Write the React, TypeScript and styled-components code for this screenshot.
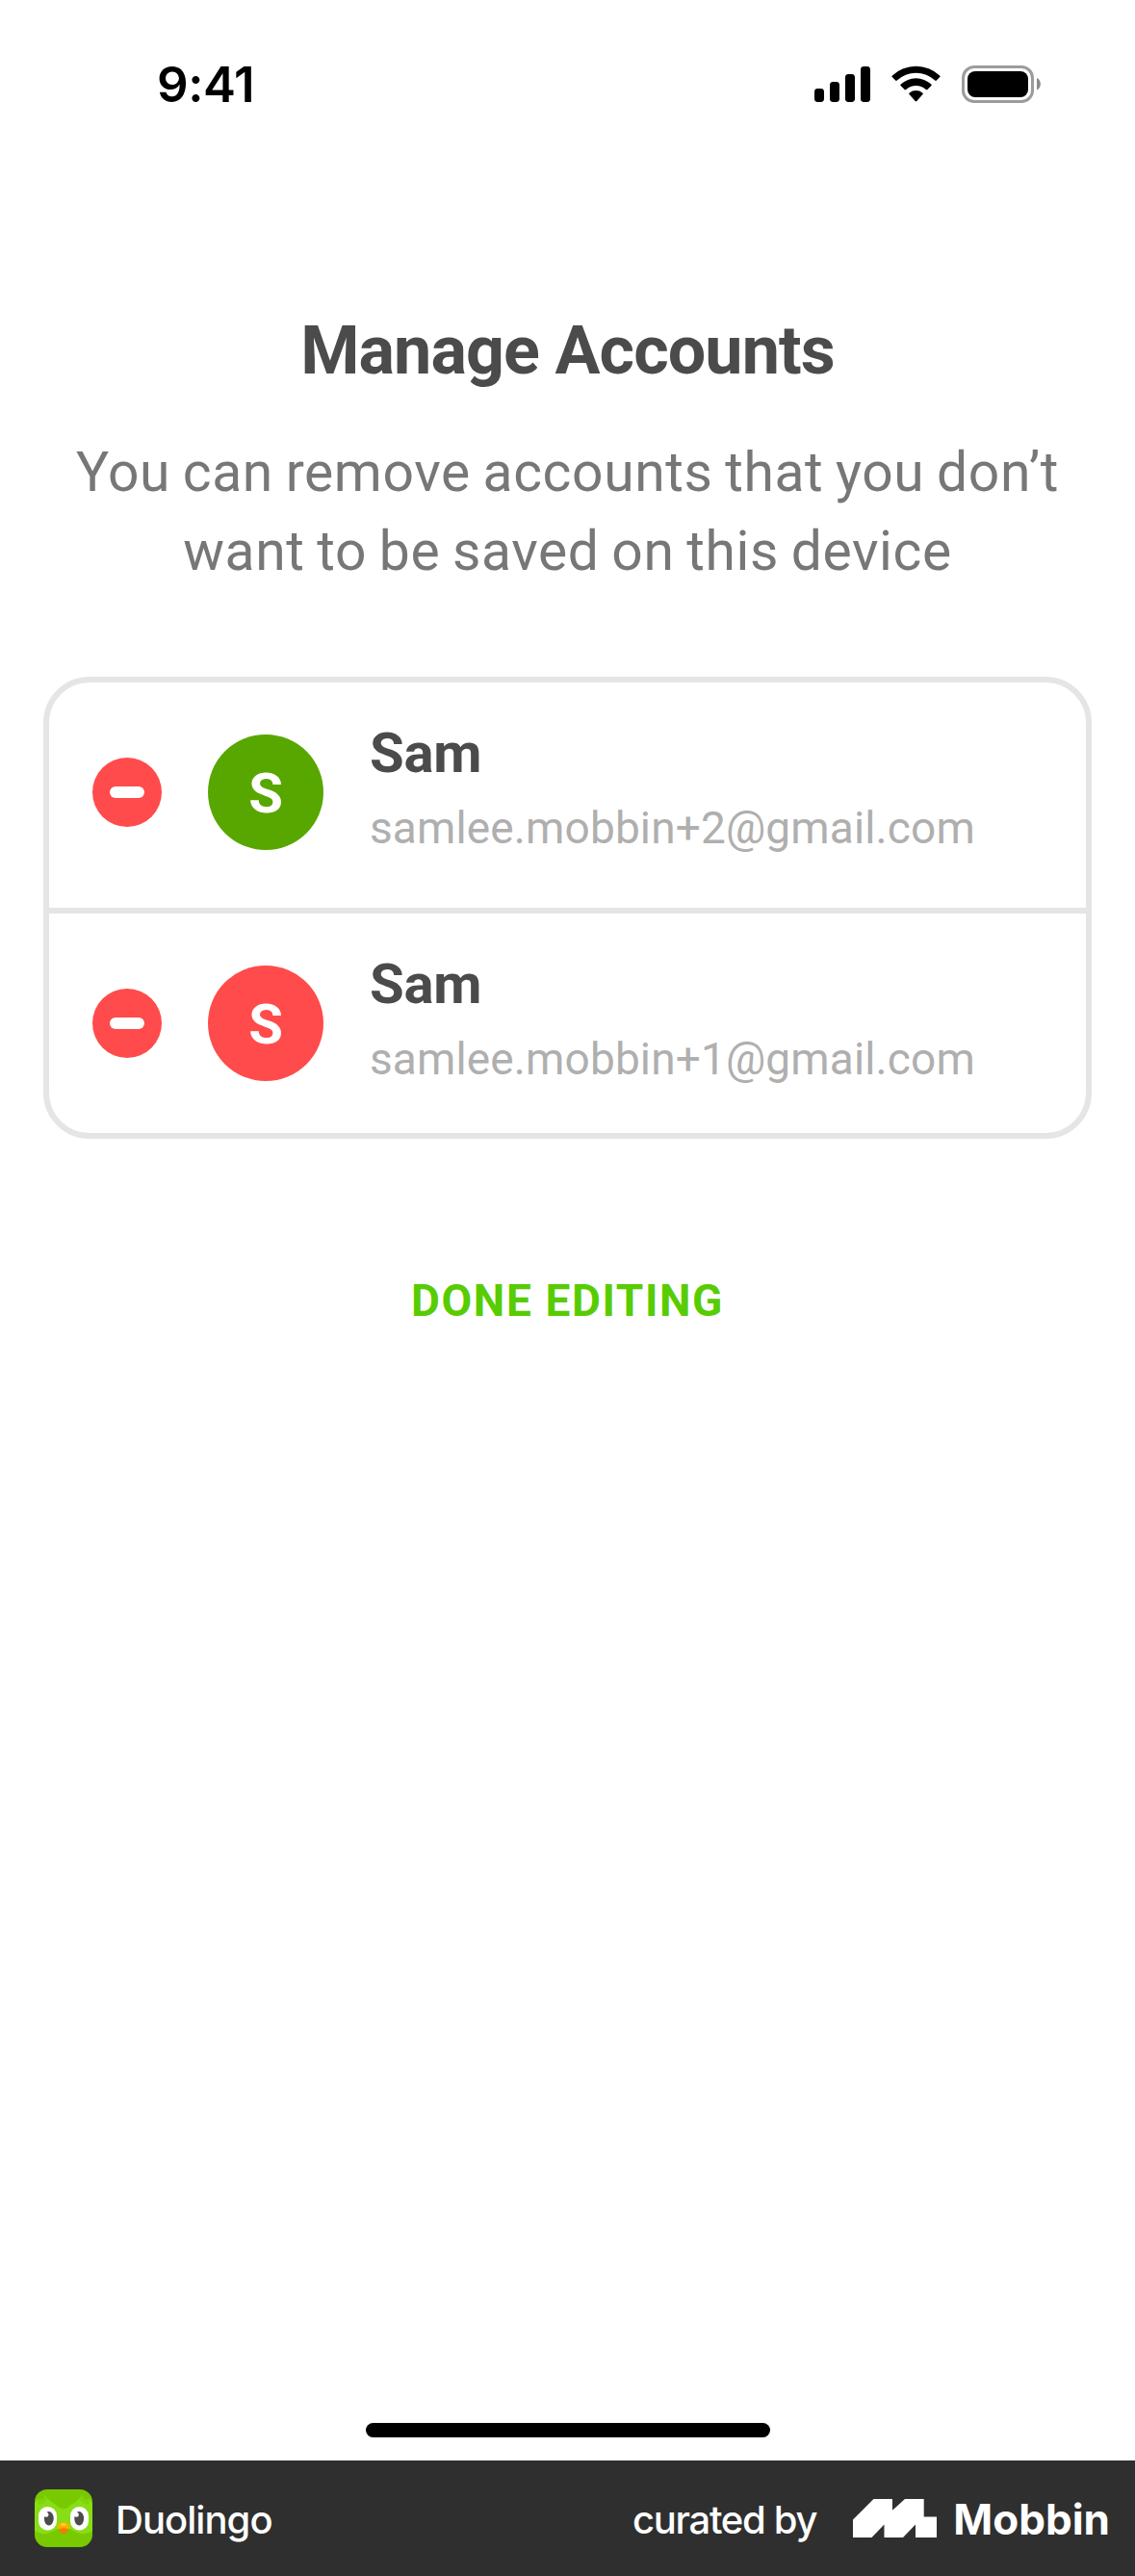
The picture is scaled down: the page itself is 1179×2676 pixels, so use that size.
import React from "react";
import styled, { createGlobalStyle } from "styled-components";

const GlobalStyle = createGlobalStyle`
  *, *::before, *::after { box-sizing: border-box; }
  body { margin: 0; background: #fff; }
  h1, p { margin: 0; font-weight: 400; }
  svg { display: block; flex: none; }
`;

const rounded = `Roboto, "Liberation Sans", sans-serif`;
const system = `Inter, "Liberation Sans", sans-serif`;

const Screen = styled.div`
  width: 1179px;
  height: 2676px;
  display: flex;
  flex-direction: column;
  overflow: hidden;
  background: #fff;
  font-family: ${rounded};
`;

const StatusBar = styled.header`
  display: flex;
  justify-content: space-between;
  align-items: flex-start;
  height: 322px;
  padding: 58px 98px 0 163px;
`;

const Clock = styled.span`
  font: 600 51px/60px ${system};
  letter-spacing: -0.4px;
  color: #000;
`;

const StatusIcons = styled.div`
  display: flex;
  align-items: flex-start;
  padding-top: 10px;
`;

const Main = styled.main`
  flex: 1;
  display: flex;
  flex-direction: column;
  align-items: center;
`;

const Title = styled.h1`
  font-size: 70px;
  line-height: 84px;
  font-weight: 700;
  letter-spacing: -0.9px;
  color: #4b4b4b;
`;

const Description = styled.p`
  width: 1060px;
  margin-top: 44px;
  font-size: 57px;
  line-height: 82px;
  letter-spacing: 0.6px;
  word-spacing: -2px;
  text-align: center;
  color: #777;
`;

const AccountList = styled.ul`
  list-style: none;
  width: 1089px;
  margin: 89px 0 0;
  padding: 0;
  border: 6px solid #e5e5e5;
  border-radius: 48px;
`;

const AccountRow = styled.li`
  display: flex;
  align-items: center;
  height: 228px;
  padding-left: 45px;

  & + & {
    border-top: 6px solid #e5e5e5;
    height: 234px;
  }
  &:first-child {
    height: 234px;
    padding-bottom: 6px;
  }
`;

const RemoveButton = styled.button`
  display: grid;
  place-items: center;
  width: 72px;
  height: 72px;
  padding: 0;
  border: 0;
  border-radius: 50%;
  background: #ff4b4b;

  &::before {
    content: "";
    width: 36px;
    height: 12px;
    border-radius: 6px;
    background: #fff;
  }
`;

const Avatar = styled.div<{ $color: string }>`
  width: 120px;
  height: 120px;
  margin-left: 48px;
  border-radius: 50%;
  background: ${(p) => p.$color};
  color: #fff;
  font-size: 58px;
  line-height: 122px;
  font-weight: 700;
  text-align: center;
`;

const AccountText = styled.div`
  display: flex;
  flex-direction: column;
  gap: 18px;
  margin-left: 48px;
  padding-bottom: 8px;
`;

const Name = styled.span`
  font-size: 58px;
  line-height: 64px;
  font-weight: 700;
  letter-spacing: -0.2px;
  color: #4b4b4b;
`;

const Email = styled.span`
  font-size: 46px;
  line-height: 56px;
  letter-spacing: 0.13px;
  color: #afafaf;
`;

const DoneButton = styled.button`
  margin-top: 138px;
  padding: 0;
  border: 0;
  background: none;
  font: 700 46px/60px ${rounded};
  letter-spacing: 1.6px;
  color: #58cc02;
`;

const HomeIndicator = styled.div`
  width: 420px;
  height: 15px;
  margin: auto 0 24px;
  border-radius: 8px;
  background: #000;
`;

const Footer = styled.footer`
  display: flex;
  align-items: center;
  height: 120px;
  padding: 0 26px 0 36px;
  background: #2f2f2f;
  color: #fff;
  font-family: ${system};
`;

const AppName = styled.span`
  margin-left: 24px;
  padding-top: 3px;
  font-size: 40px;
  line-height: 48px;
  font-weight: 500;
  letter-spacing: -0.95px;
`;

const Credit = styled.span`
  margin-left: auto;
  padding-top: 3px;
  font-size: 40px;
  line-height: 48px;
  font-weight: 500;
  letter-spacing: -1.3px;
`;

const MobbinMark = styled.svg`
  margin-left: 38px;
`;

const Brand = styled.span`
  margin-left: 17px;
  padding-top: 1px;
  font-size: 44px;
  line-height: 48px;
  font-weight: 700;
  letter-spacing: 0;
`;

const SystemIcons = () => (
  <StatusIcons>
    <svg width="236" height="40" viewBox="0 0 236 40">
      <rect x="1" y="24" width="10" height="14" rx="3.4" />
      <rect x="17" y="17" width="10" height="21" rx="3.4" />
      <rect x="33" y="9" width="10" height="29" rx="3.4" />
      <rect x="49" y="1" width="10" height="37" rx="3.4" />
      <path d="M81.8 12 Q81 11.200 81.900 10.400 A36 36 0 0 1 131.100 10.400 Q132 11.200 131.200 12 L127.800 15.600 Q127 16.300 126.200 15.600 A28.600 28.600 0 0 0 86.800 15.600 Q86 16.300 85.200 15.600 Z" />
      <path d="M90.600 21.100 Q89.800 20.300 90.700 19.500 A23.200 23.200 0 0 1 122.300 19.500 Q123.200 20.300 122.400 21.100 L118.400 25 Q117.600 25.700 116.800 25 A15.600 15.600 0 0 0 96.200 25 Q95.400 25.700 94.600 25 Z" />
      <path d="M99.500 30.100 Q98.700 29.300 99.700 28.500 A10.800 10.800 0 0 1 113.300 28.500 Q114.300 29.300 113.500 30.100 L107.300 36.900 Q106.500 37.700 105.700 36.900 Z" />
      <rect x="155.500" y="1.500" width="72" height="36" rx="11.500" fill="none" stroke="#9c9c9c" strokeWidth="3" />
      <rect x="160" y="6" width="63" height="27" rx="8" />
      <path d="M232 13 A7 7 0 0 1 232 25.500 Z" fill="#8c8c8c" />
    </svg>
  </StatusIcons>
);

const OwlIcon = () => (
  <svg width="60" height="60" viewBox="0 0 60 60">
    <defs>
      <clipPath id="owl-tile">
        <rect width="60" height="60" rx="13" />
      </clipPath>
    </defs>
    <g clipPath="url(#owl-tile)">
      <rect width="60" height="60" fill="#78c900" />
      <path d="M0 15 L3 10 L8 11 L11 6 Q16 13 22 16 Q26 20 30 20 Q34 20 38 16 Q44 13 49 6 L52 11 L57 10 L60 15 V43 Q52 49 42 44 L36 41 H24 L18 44 Q8 49 0 43 Z" fill="#89dd14" />
      <path d="M3 10 L8 11 L11 6 L14 10 L9 15 L4 16 Z M57 10 L52 11 L49 6 L46 10 L51 15 L56 16 Z" fill="#81d40a" />
      <rect x="4" y="18" width="19" height="24.500" rx="9.500" fill="#fff" />
      <rect x="37" y="18" width="19" height="24.500" rx="9.500" fill="#fff" />
      <ellipse cx="14.800" cy="30.300" rx="4.900" ry="7.200" fill="#4b4b4b" />
      <ellipse cx="46.200" cy="30.300" rx="4.900" ry="7.200" fill="#4b4b4b" />
      <circle cx="11.900" cy="26.200" r="2.500" fill="#fff" />
      <circle cx="43.300" cy="26.200" r="2.500" fill="#fff" />
      <path d="M25 40 H35 Q34.500 46 30 46 Q25.500 46 25 40 Z" fill="#f47d00" />
      <path d="M23.500 38.500 Q26 34 30 34 Q34 34 36.500 38.500 Q37 41 34 41 Q30 39.500 26 41 Q23 41 23.500 38.500 Z" fill="#ffb100" />
      <ellipse cx="30" cy="36.600" rx="2.600" ry="1.500" fill="#ffd03a" />
    </g>
  </svg>
);

const accounts = [
  { name: "Sam", email: "samlee.mobbin+2@gmail.com", color: "#58a700" },
  { name: "Sam", email: "samlee.mobbin+1@gmail.com", color: "#ff4b4b" },
];

export default function App() {
  return (
    <Screen>
      <GlobalStyle />
      <StatusBar>
        <Clock>9:41</Clock>
        <SystemIcons />
      </StatusBar>
      <Main>
        <Title>Manage Accounts</Title>
        <Description>
          You can remove accounts that you don’t
          <br />
          want to be saved on this device
        </Description>
        <AccountList>
          {accounts.map((a) => (
            <AccountRow key={a.email}>
              <RemoveButton aria-label="Remove" />
              <Avatar $color={a.color}>{a.name[0]}</Avatar>
              <AccountText>
                <Name>{a.name}</Name>
                <Email>{a.email}</Email>
              </AccountText>
            </AccountRow>
          ))}
        </AccountList>
        <DoneButton>DONE EDITING</DoneButton>
        <HomeIndicator />
      </Main>
      <Footer>
        <OwlIcon />
        <AppName>Duolingo</AppName>
        <Credit>curated by</Credit>
        <MobbinMark width="87" height="40" viewBox="0 0 87 40" fill="#fff">
          <path d="M0 21.500 L21.500 0 H41 V11.800 L54 0 H73.700 V18.500 H87 V40 H65 V26.600 L52 40 H32.500 V26.600 L19.500 40 H0 Z" />
        </MobbinMark>
        <Brand>Mobbin</Brand>
      </Footer>
    </Screen>
  );
}
